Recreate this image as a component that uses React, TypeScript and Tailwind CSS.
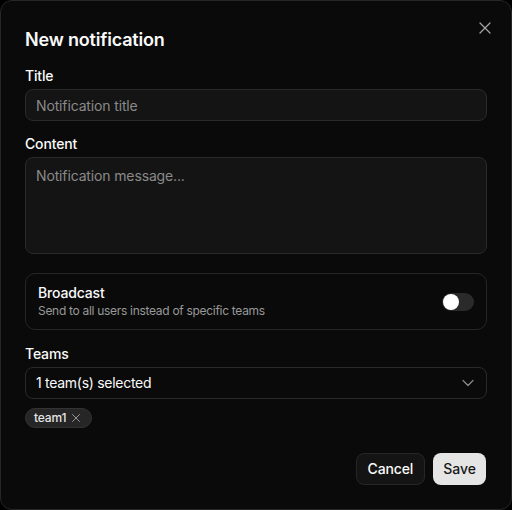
import { ChevronDown, X } from "lucide-react";

export default function App() {
  return (
    <div className="w-[512px] h-[510px] bg-black font-['Inter',sans-serif] text-[#fafafa]">
      <div className="relative flex h-full flex-col rounded-xl border border-[#262626] bg-[#0a0a0a] p-6">
        <button type="button" className="absolute right-[16px] top-[17px] text-[#a3a3a3]">
          <X size={20} strokeWidth={1.5} />
        </button>

        <h2 className="pt-[2px] text-lg font-semibold leading-[26px] tracking-[-0.01em]">New notification</h2>

        <div className="mt-4 flex flex-col tracking-[-0.01em]">
          <label className="text-sm font-medium leading-[14px]">Title</label>
          <input
            placeholder="Notification title"
            className="mt-1.5 h-8 rounded-lg border border-[#2a2a2a] bg-[#141414] px-2.5 text-sm tracking-[-0.01em] text-[#fafafa] placeholder:text-[#8a8a8a] outline-none"
          />

          <label className="mt-4 text-sm font-medium leading-[14px]">Content</label>
          <textarea
            placeholder="Notification message..."
            className="mt-1.5 h-[97px] resize-none rounded-lg border border-[#2a2a2a] bg-[#141414] px-2.5 py-2 text-sm tracking-[-0.01em] text-[#fafafa] placeholder:text-[#8a8a8a] outline-none"
          />

          <div className="mt-[19px] flex h-[57px] items-center justify-between rounded-[10px] border border-[#262626] px-3">
            <div className="flex flex-col">
              <span className="text-sm font-medium leading-4">Broadcast</span>
              <span className="mt-[2px] text-xs leading-4 tracking-[-0.025em] text-[#999999]">
                Send to all users instead of specific teams
              </span>
            </div>
            <div className="flex h-[18px] w-8 items-center rounded-full bg-[#2a2a2a] px-[1px]">
              <div className="h-4 w-4 rounded-full bg-white" />
            </div>
          </div>

          <label className="mt-[17px] text-sm font-medium leading-[14px]">Teams</label>
          <div className="mt-1.5 flex h-8 items-center justify-between rounded-lg border border-[#2a2a2a] pl-2.5 pr-2">
            <span className="text-sm tracking-[-0.02em]">1 team(s) selected</span>
            <ChevronDown size={20} strokeWidth={1.5} className="text-[#8a8a8a]" />
          </div>

          <div className="mt-[9px] flex">
            <span className="flex h-5 items-center gap-[3px] rounded-full border border-[#333333] bg-[#262626] pl-2 pr-2 text-xs font-medium text-[#e5e5e5]">
              team1
              <X size={14} strokeWidth={1.5} className="text-[#a3a3a3]" />
            </span>
          </div>
        </div>

        <div className="mt-auto flex justify-end gap-2">
          <button
            type="button"
            className="h-8 rounded-lg border border-[#262626] bg-[#141414] px-[11px] text-sm font-medium tracking-[-0.01em]"
          >
            Cancel
          </button>
          <button
            type="button"
            className="mr-[1px] h-8 rounded-lg bg-[#e5e5e5] px-2.5 text-sm font-medium text-[#171717]"
          >
            Save
          </button>
        </div>
      </div>
    </div>
  );
}
